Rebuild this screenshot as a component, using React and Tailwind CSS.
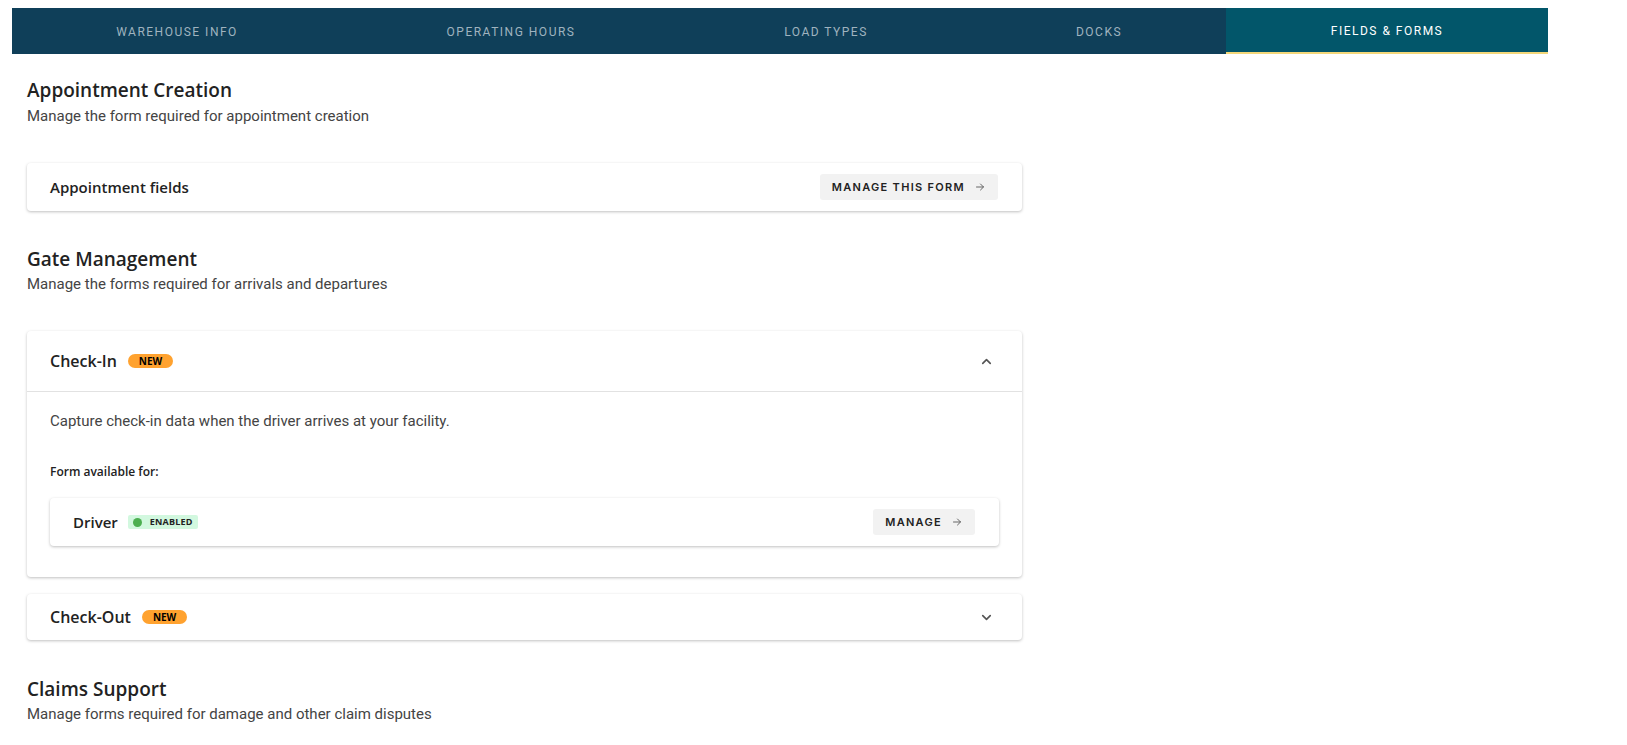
import React from "react";

const heading = { fontFamily: "'Open Sans', Inter, 'Noto Sans', sans-serif" };
const btnFont = { fontFamily: "Inter, 'Noto Sans', sans-serif" };

function Arrow() {
  return (
    <svg width="12" height="12" viewBox="0 0 24 24" fill="none" stroke="#666" strokeWidth="2" strokeLinecap="round" strokeLinejoin="round">
      <path d="M5 12h14" />
      <path d="M13 6l6 6-6 6" />
    </svg>
  );
}

function Chevron({ up }) {
  return (
    <svg width="15" height="15" viewBox="0 0 24 24" fill="none" stroke="#555" strokeWidth="2.6" strokeLinecap="round" strokeLinejoin="round">
      {up ? <path d="M6 15l6-6 6 6" /> : <path d="M6 9l6 6 6-6" />}
    </svg>
  );
}

function NewBadge() {
  return (
    <span className="inline-flex items-center justify-center h-[14px] px-[11px] rounded-full bg-[#ffa22f] text-[10px] font-bold text-black leading-none" style={heading}>
      NEW
    </span>
  );
}

function ManageButton({ label }) {
  return (
    <button className="flex items-center gap-[9px] h-[26px] px-[12px] rounded-[3px] bg-[#f2f2f2] text-[11px] font-semibold tracking-[1.3px] text-[#222]" style={btnFont}>
      {label}
      <Arrow />
    </button>
  );
}

const tabs = [
  { label: "WAREHOUSE INFO", w: "w-[330px]" },
  { label: "OPERATING HOURS", w: "w-[338px]" },
  { label: "LOAD TYPES", w: "w-[292px]" },
  { label: "DOCKS", w: "w-[254px]" },
  { label: "FIELDS & FORMS", w: "w-[322px]", active: true },
];

export default function App() {
  return (
    <div className="bg-white text-[#222] overflow-hidden h-[745px]" style={{ fontFamily: "Roboto, 'Liberation Sans', sans-serif" }}>
      <div className="pt-[8px] px-[12px]">
        <div className="flex w-[1536px] h-[46px] bg-[#0f3f59]">
          {tabs.map((t) => (
            <div
              key={t.label}
              className={
                t.w +
                " flex items-center justify-center pt-[2px] text-[12px] tracking-[1.5px] " +
                (t.active
                  ? "bg-[#02566a] text-white border-b-2 border-[#f3d77a]"
                  : "text-[#9fb3bf]")
              }
            >
              {t.label}
            </div>
          ))}
        </div>
      </div>

      <div className="pl-[27px] w-[1022px]">
        <h2 className="mt-[24px] text-[19px] font-semibold text-[#222] leading-[24px]" style={heading}>
          Appointment Creation
        </h2>
        <p className="mt-[5px] text-[15px] text-[#444] leading-[18px]">Manage the form required for appointment creation</p>

        <div className="mt-[38px] h-[48px] rounded-[4px] bg-white shadow-[0_1px_3px_rgba(0,0,0,0.25)] flex items-center justify-between pl-[23px] pr-[24px]">
          <span className="text-[15px] font-semibold text-[#222]" style={heading}>Appointment fields</span>
          <ManageButton label="MANAGE THIS FORM" />
        </div>

        <h2 className="mt-[36px] text-[19px] font-semibold text-[#222] leading-[24px]" style={heading}>
          Gate Management
        </h2>
        <p className="mt-[4px] text-[15px] text-[#444] leading-[18px]">Manage the forms required for arrivals and departures</p>

        <div className="mt-[38px] rounded-[4px] bg-white shadow-[0_1px_3px_rgba(0,0,0,0.25)]">
          <div className="h-[61px] flex items-center justify-between pl-[23px] pr-[28px] border-b border-[#e2e2e2]">
            <div className="flex items-center gap-[11px]">
              <span className="text-[16px] font-semibold text-[#222]" style={heading}>Check-In</span>
              <NewBadge />
            </div>
            <Chevron up />
          </div>
          <div className="pl-[23px] pr-[23px] pt-[20px] pb-[31px]">
            <p className="text-[15px] text-[#444] leading-[18px]">Capture check-in data when the driver arrives at your facility.</p>
            <p className="mt-[33px] text-[12px] font-semibold text-[#222]" style={heading}>Form available for:</p>
            <div className="mt-[17px] h-[48px] rounded-[4px] bg-white shadow-[0_1px_3px_rgba(0,0,0,0.25)] flex items-center justify-between pl-[23px] pr-[24px]">
              <div className="flex items-center gap-[10px]">
                <span className="text-[15px] font-semibold text-[#222]" style={heading}>Driver</span>
                <span className="inline-flex items-center gap-[8px] h-[14px] pl-[5px] pr-[5px] rounded-[2px] bg-[#d2f8df] text-[9px] font-bold tracking-[0.2px] text-[#222]" style={heading}>
                  <span className="w-[9px] h-[9px] rounded-full bg-[#4caf50]" />
                  ENABLED
                </span>
              </div>
              <ManageButton label="MANAGE" />
            </div>
          </div>
        </div>

        <div className="mt-[17px] h-[46px] rounded-[4px] bg-white shadow-[0_1px_3px_rgba(0,0,0,0.25)] flex items-center justify-between pl-[23px] pr-[28px]">
          <div className="flex items-center gap-[11px]">
            <span className="text-[16px] font-semibold text-[#222]" style={heading}>Check-Out</span>
            <NewBadge />
          </div>
          <Chevron />
        </div>

        <h2 className="mt-[37px] text-[19px] font-semibold text-[#222] leading-[24px]" style={heading}>
          Claims Support
        </h2>
        <p className="mt-[4px] text-[15px] text-[#444] leading-[18px]">Manage forms required for damage and other claim disputes</p>
      </div>
    </div>
  );
}
